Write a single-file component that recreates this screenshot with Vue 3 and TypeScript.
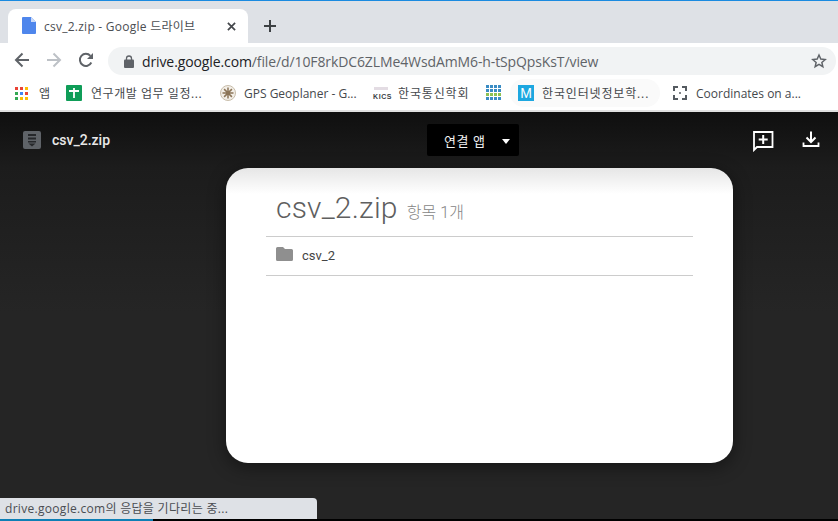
<script setup lang="ts">
const url = 'drive.google.com/file/d/10F8rkDC6ZLMe4WsdAmM6-h-tSpQpsKsT/view'
const colors = ['#ea4335','#ea4335','#fbbc05','#34a853','#4285f4','#ea4335','#34a853','#fbbc05','#fbbc05']
</script>

<template>
  <div class="page">
    <div class="tabstrip">
      <div class="tab">
        <svg class="fav" width="14" height="17" viewBox="0 0 14 17"><path d="M1 0h8l5 5v11a1 1 0 0 1-1 1H1a1 1 0 0 1-1-1V1a1 1 0 0 1 1-1z" fill="#4e86ec"/><path d="M9 0l5 5H9z" fill="#c9dafa"/></svg>
        <span class="tab-title">csv_2.zip - Google 드라이브</span>
        <svg class="close" width="9" height="9" viewBox="0 0 10 10"><path d="M1 1l8 8M9 1L1 9" stroke="#44474b" stroke-width="1.900"/></svg>
      </div>
      <svg class="plus" width="14" height="14" viewBox="0 0 14 14"><path d="M7 1v12M1 7h12" stroke="#3c4043" stroke-width="2"/></svg>
    </div>

    <div class="toolbar">
      <svg width="16" height="16" viewBox="0 0 16 16"><path d="M15 8H2.500M8.500 1.500L2 8l6.500 6.500" fill="none" stroke="#5f6368" stroke-width="2"/></svg>
      <svg width="16" height="16" viewBox="0 0 16 16"><path d="M1 8h12.500M7.500 1.500L14 8l-6.500 6.500" fill="none" stroke="#bdc1c6" stroke-width="2"/></svg>
      <svg width="16" height="16" viewBox="0 0 16 16"><path d="M13.300 10.500A6 6 0 1 1 12.400 3.900" fill="none" stroke="#5f6368" stroke-width="2"/><path d="M15 1v6H9z" fill="#5f6368"/></svg>
      <div class="omnibox">
        <svg width="10" height="13" viewBox="0 0 10 13"><path d="M2.500 5V3.500a2.500 2.500 0 0 1 5 0V5" fill="none" stroke="#5f6368" stroke-width="1.300"/><rect y="4.500" width="10" height="8.500" rx="1" fill="#5f6368"/></svg>
        <span class="url"><span class="dark">drive.google.com</span>{{ url.slice(16) }}</span>
        <svg class="star" width="16" height="16" viewBox="0 0 24 24"><path d="M12 3l2.700 6.100 6.600.6-5 4.400 1.500 6.500L12 17.200l-5.800 3.400 1.500-6.500-5-4.400 6.600-.6z" fill="none" stroke="#5f6368" stroke-width="2.200"/></svg>
      </div>
    </div>

    <div class="bookmarks">
      <div class="bm bm-apps">
        <div class="apps"><i v-for="(c, i) in colors" :key="i" :style="{ background: c }"></i></div>
        <span>앱</span>
      </div>
      <div class="bm bm-plan">
        <svg width="16" height="16" viewBox="0 0 16 16"><rect width="16" height="16" rx="1" fill="#0f9d58"/><path d="M3 6h10M8 3v10" stroke="#fff" stroke-width="1.800"/></svg>
        <span class="ko">연구개발 업무 일정...</span>
      </div>
      <div class="bm bm-gps">
        <svg width="16" height="16" viewBox="0 0 16 16"><circle cx="8" cy="8" r="7.500" fill="#f3efe8" stroke="#c8bdaa"/><path d="M8 2.500v11M2.500 8h11M4.100 4.100l7.800 7.800M11.900 4.100l-7.800 7.800" stroke="#8c7558" stroke-width="1.500"/></svg>
        <span>GPS Geoplaner - G...</span>
      </div>
      <div class="bm bm-kics">
        <div class="kics"><b class="kics-top"></b><b class="kics-word">KICS</b></div>
        <span class="ko-wide">한국통신학회</span>
      </div>
      <div class="grid-ico">
        <i v-for="n in 16" :key="n" :class="n > 8 && n <= 12 ? 'g' : ''"></i>
      </div>
      <div class="bm bm-m">
        <div class="m">M</div>
        <span class="ko-wide">한국인터넷정보학...</span>
      </div>
      <div class="bm bm-coord">
        <svg width="14" height="14" viewBox="0 0 14 14"><path d="M1 5V1h4M9 1h4v4M13 9v4H9M5 13H1V9" fill="none" stroke="#555b61" stroke-width="2"/><path d="M7 6v2M6 7h2" stroke="#555b61"/></svg>
        <span>Coordinates on a...</span>
      </div>
    </div>

    <div class="viewer">
      <div class="viewer-head">
        <div class="file">
          <svg width="18" height="18" viewBox="0 0 18 18"><rect width="18" height="18" rx="2" fill="#5f6368"/><path d="M5 3h8v2H5zM5 6.500h8v2H5zM5 10h8v1.500H5z" fill="#26282b"/><path d="M5.500 12.500h7L9 15.500z" fill="#26282b"/></svg>
          <span>csv_2.zip</span>
        </div>
        <div class="open"><span>연결 앱</span><i class="caret"></i></div>
        <div class="actions">
          <svg width="22" height="22" viewBox="0 0 22 22"><path d="M2 2h18.500v15H5l-3 3z" fill="none" stroke="#fff" stroke-width="1.800"/><path d="M11.200 5v9M6.700 9.500h9" stroke="#fff" stroke-width="2"/></svg>
          <svg width="18" height="18" viewBox="0 0 18 18"><path d="M9 1.500v10M4.500 7.500L9 12l4.500-4.500" fill="none" stroke="#fff" stroke-width="2"/><path d="M1.500 12.500v3.500h15v-3.500" fill="none" stroke="#fff" stroke-width="1.800"/></svg>
        </div>
      </div>

      <div class="card">
        <div class="title"><span class="name">csv_2.zip</span><span class="count">항목 1개</span></div>
        <div class="row">
          <svg width="17" height="14" viewBox="0 0 17 14"><path d="M1.500 0H7l2 2h6.500A1.500 1.500 0 0 1 17 3.500v9a1.500 1.500 0 0 1-1.500 1.500h-14A1.500 1.500 0 0 1 0 12.500v-11A1.500 1.500 0 0 1 1.500 0z" fill="#8f8f8f"/></svg>
          <span>csv_2</span>
        </div>
      </div>
    </div>

    <div class="status">drive.google.com의 응답을 기다리는 중...</div>
    <div class="taskbar"></div>
  </div>
</template>

<style>
html, body { margin: 0; background: #252525; }
</style>

<style scoped>
.page {
  position: relative;
  width: 838px;
  height: 521px;
  overflow: hidden;
  display: flex;
  flex-direction: column;
  font-family: "Open Sans", "Noto Sans CJK KR", sans-serif;
}
.tabstrip {
  height: 42px;
  border-top: 1px solid #1a8ae0;
  background: #dee1e6;
  display: flex;
  align-items: flex-end;
  padding-left: 8px;
  flex: none;
}
.tab {
  width: 240px;
  height: 34px;
  background: #fff;
  border-radius: 8px 8px 0 0;
  display: flex;
  align-items: center;
  padding-left: 14px;
  box-sizing: border-box;
  position: relative;
}
.fav { flex: none; margin-top: -1px; }
.tab-title {
  margin-left: 8px;
  font-size: 12px;
  color: #4b4e52;
  white-space: nowrap;
  letter-spacing: .25px;
}
.close { position: absolute; right: 12px; top: 13px; }
.plus { margin: 0 0 10px 15px; }
.toolbar {
  height: 33px;
  background: #fff;
  display: flex;
  align-items: center;
  padding-left: 14px;
  gap: 16px;
  flex: none;
}
.omnibox {
  width: 728px;
  height: 28px;
  margin-left: -2px;
  margin-top: 3px;
  background: #f1f3f4;
  border-radius: 14px;
  display: flex;
  align-items: center;
  padding-left: 16px;
  box-sizing: border-box;
  position: relative;
}
.url {
  margin-left: 8px;
  font-size: 14px;
  color: #5f6368;
  white-space: nowrap;
  letter-spacing: -.11px;
}
.dark { color: #202124; }
.star { position: absolute; right: 9px; top: 6px; }
.bookmarks {
  height: 34px;
  background: #fff;
  border-bottom: 2px solid #e0e0e0;
  box-sizing: content-box;
  display: flex;
  align-items: center;
  flex: none;
  font-size: 12px;
  color: #45484c;
  white-space: nowrap;
}
.ko { letter-spacing: .55px; }
.ko-wide { letter-spacing: .85px; }
.bm { display: flex; align-items: center; flex: none; }
.bm svg, .m, .kics, .apps { flex: none; }
.bm-apps { margin-left: 15px; gap: 11px; width: 51px; }
.apps {
  display: grid;
  grid-template-columns: repeat(3, 3px);
  gap: 2px;
}
.apps i { width: 3px; height: 3px; display: block; }
.bm-plan { gap: 9px; width: 154px; }
.bm-gps { gap: 8px; width: 153px; }
.bm-kics { gap: 9px; width: 113px; }
.kics { width: 16px; height: 16px; position: relative; }
.kics-top {
  position: absolute; left: 1px; top: 2px; width: 14px; height: 3px;
  background: #e3dce3;
}
.kics-word {
  position: absolute; left: 0; bottom: 0; font: 700 7px/8px "Liberation Sans", sans-serif;
  color: #3b3f44; letter-spacing: .6px;
}
.grid-ico {
  width: 16px;
  height: 16px;
  display: grid;
  grid-template-columns: repeat(4, 3px);
  grid-auto-rows: 3px;
  gap: 1px;
  flex: none;
}
.grid-ico i { background: #3a8cc4; display: block; }
.grid-ico i.g { background: #8cc152; }
.bm-m {
  gap: 8px;
  margin-left: 8px;
  padding: 0 13px 0 8px;
  width: 150px;
  height: 28px;
  box-sizing: border-box;
  background: #fafafa;
  border-radius: 14px;
}
.m {
  width: 16px;
  height: 16px;
  background: #1da7e0;
  color: #fff;
  font: 14px/16px "Liberation Sans", sans-serif;
  text-align: center;
}
.bm-coord { gap: 9px; margin-left: 13px; }
.viewer {
  flex: 1;
  background: linear-gradient(#0f0f0f 0, #1c1c1c 55px, #252525 200px, #252525 100%);
  display: flex;
  flex-direction: column;
  position: relative;
}
.viewer-head {
  height: 56px;
  flex: none;
  display: flex;
  align-items: center;
  position: relative;
}
.file {
  display: flex;
  align-items: center;
  gap: 11px;
  margin-left: 23px;
  color: #e8e8e8;
  font: 500 14px "Roboto", sans-serif;
  margin-top: -1px;
}
.open {
  position: absolute;
  left: 427px;
  top: 12px;
  width: 92px;
  height: 32px;
  background: #000;
  border-radius: 2px;
  color: #f1f1f1;
  font-size: 13px;
  letter-spacing: .6px;
  display: flex;
  align-items: center;
  padding-left: 17px;
  box-sizing: border-box;
}
.caret {
  width: 0; height: 0;
  border: 4.500px solid transparent;
  border-top: 5px solid #fff;
  border-bottom: 0;
  margin-left: 16px;
  margin-top: 2px;
}
.actions {
  position: absolute;
  right: 18px;
  top: 18px;
  display: flex;
  align-items: flex-start;
  gap: 28px;
}
.card {
  width: 507px;
  height: 295px;
  margin-left: 226px;
  border-radius: 22px;
  background: linear-gradient(#e6e6e6 0, #fff 26px);
  box-shadow: 0 4px 18px rgba(0,0,0,.45);
  box-sizing: border-box;
  padding: 0 40px;
  color: #666;
}
.title {
  height: 69px;
  border-bottom: 1px solid #ccc;
  display: flex;
  align-items: baseline;
  padding: 18px 0 0 10px;
  box-sizing: border-box;
  font-family: "Roboto", "Noto Sans CJK KR", sans-serif;
}
.name { font-size: 30px; line-height: 44px; color: #5f5f5f; font-weight: 300; letter-spacing: .2px; }
.count { font-size: 16px; margin-left: 9px; color: #858585; font-weight: 300; letter-spacing: .1px; }
.row {
  height: 39px;
  box-sizing: border-box;
  border-bottom: 1px solid #ccc;
  display: flex;
  align-items: center;
  padding: 0 0 2px 10px;
  gap: 9px;
  font: 13px "Roboto", sans-serif;
  color: #444;
}
.row svg { margin-top: -2px; }
.status {
  position: absolute;
  left: 0;
  top: 498px;
  width: 317px;
  height: 21px;
  background: #dee1e6;
  border-top-right-radius: 4px;
  font-size: 12px;
  line-height: 21px;
  padding-left: 5px;
  box-sizing: border-box;
  color: #4a4d52;
  white-space: nowrap;
  letter-spacing: .3px;
}
.taskbar {
  position: absolute;
  left: 0;
  top: 519px;
  width: 838px;
  height: 2px;
  background: linear-gradient(to right, #0e7fb5 153px, #000 153px);
}
</style>
